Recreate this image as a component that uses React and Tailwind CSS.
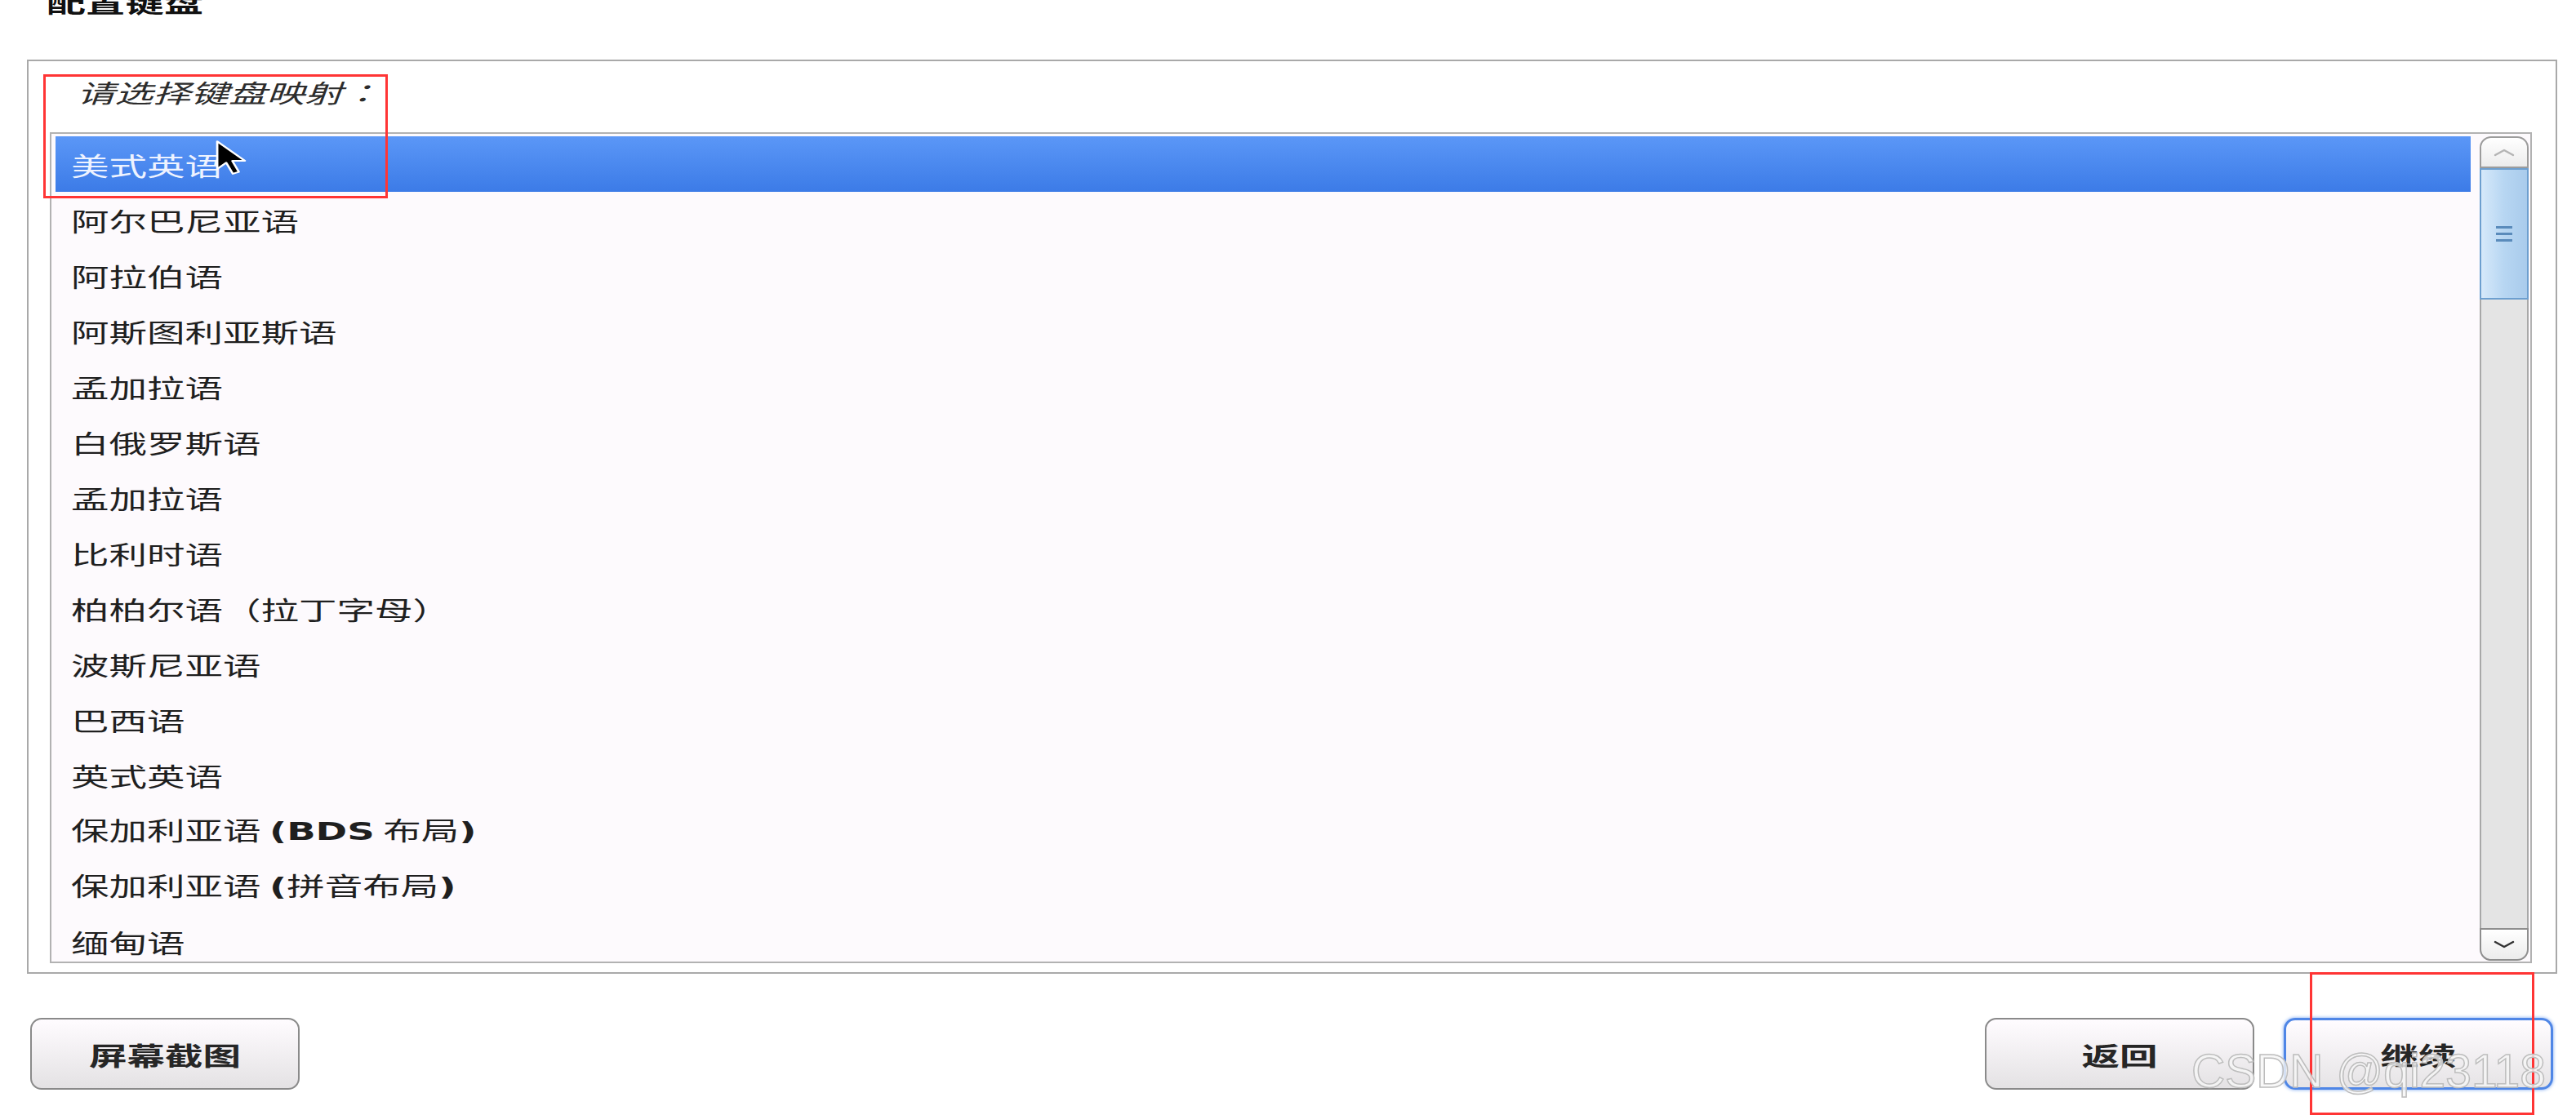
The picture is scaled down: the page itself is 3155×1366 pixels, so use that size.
import React from "react";

const layouts = [
  "美式英语",
  "阿尔巴尼亚语",
  "阿拉伯语",
  "阿斯图利亚斯语",
  "孟加拉语",
  "白俄罗斯语",
  "孟加拉语",
  "比利时语",
  "berber",
  "波斯尼亚语",
  "巴西语",
  "英式英语",
  "bds",
  "pinyin",
  "缅甸语",
];

// the source screenshot is stretched sideways, so text gets a 1.5 x scale
function Stretch({ children, className = "" }) {
  return (
    <span className={`inline-block whitespace-nowrap leading-none scale-x-150 ${className}`}>
      {children}
    </span>
  );
}

// full-width punctuation centred in its cell, as in the screenshot
function Punct({ children }) {
  return <span className="font-['Noto_Sans_CJK_TC']">{children}</span>;
}

function LayoutName({ name }) {
  if (name === "berber") {
    return (
      <>
        柏柏尔语<Punct>（</Punct>拉丁字母<Punct>）</Punct>
      </>
    );
  }
  if (name === "bds") {
    return (
      <>
        保加利亚语 <b className="font-['DejaVu_Sans'] font-bold">(BDS</b> 布局<b className="font-['DejaVu_Sans'] font-bold">)</b>
      </>
    );
  }
  if (name === "pinyin") {
    return (
      <>
        保加利亚语 <b className="font-['DejaVu_Sans'] font-bold">(</b>拼音布局<b className="font-['DejaVu_Sans'] font-bold">)</b>
      </>
    );
  }
  return name;
}

function Chevron({ down, color }) {
  return (
    <svg width="26" height="10" viewBox="0 0 26 10" fill="none">
      <path
        d={down ? "M2 2 L13 8 L24 2" : "M2 8 L13 2 L24 8"}
        stroke={color}
        strokeWidth="2.5"
        strokeLinecap="round"
        strokeLinejoin="round"
      />
    </svg>
  );
}

function Scrollbar() {
  return (
    <div className="flex w-[60px] flex-col pt-[3px] pb-[1px]">
      <div className="flex h-[39px] items-center justify-center rounded-t-[14px] border-2 border-[#9c9c9c] bg-linear-to-b from-white to-[#ececec]">
        <Chevron color="#b4b4b4" />
      </div>
      <div className="flex h-[161px] flex-col items-center justify-center gap-[5px] border-2 border-[#6d9fcf] bg-linear-to-r from-[#d6e9fa] via-[#b7d6f2] to-[#a9cbec]">
        <div className="h-[3px] w-[20px] bg-[#5a8bbb]" />
        <div className="h-[3px] w-[20px] bg-[#5a8bbb]" />
        <div className="h-[3px] w-[20px] bg-[#5a8bbb]" />
      </div>
      <div className="flex-1 border-x-2 border-[#a8a8a8] bg-[#e4e4e4]" />
      <div className="flex h-[40px] items-center justify-center rounded-b-[14px] border-2 border-[#8e8e8e] bg-linear-to-b from-white to-[#ececec]">
        <Chevron down color="#333333" />
      </div>
    </div>
  );
}

function Button({ label, focused }) {
  return (
    <div
      className={
        focused
          ? "flex h-[88px] w-[330px] items-center justify-center rounded-[14px] border-[3px] border-[#4f86e6] bg-linear-to-b from-[#fffcff] to-[#e6e4e6] shadow-[0_0_4px_#7aa6f0]"
          : "flex h-[88px] w-[330px] items-center justify-center rounded-[14px] border-2 border-[#8a8a8a] bg-linear-to-b from-[#fffcff] to-[#e4e2e4]"
      }
    >
      <Stretch className="text-[31px] font-bold text-[#262626]">{label}</Stretch>
    </div>
  );
}

export default function App() {
  return (
    <div className="relative h-[1366px] w-[3155px] overflow-hidden bg-white font-['Noto_Sans_CJK_SC','Noto_Sans',sans-serif] text-[#1f1f1f]">
      <div className="h-[73px] pl-[57px]">
        <div className="-translate-y-[15px]">
          <Stretch className="origin-left text-[32px] font-bold text-[#111]">配置键盘</Stretch>
        </div>
      </div>

      <div className="ml-[33px] flex h-[1120px] w-[3099px] flex-col border-2 border-[#a9a9a9] pt-[17px] pb-[11px]">
        <div className="flex h-[40px] items-center pl-[59px]">
          <Stretch className="origin-left text-[31px] italic text-[#2c2c2c]">
            请选择键盘映射<Punct>：</Punct>
          </Stretch>
        </div>

        <div className="mt-[30px] ml-[26px] flex h-[1018px] w-[3040px] border-2 border-[#b2b2b2] bg-[#fdfafd] pr-[2px]">
          <div className="mr-[11px] flex-1 overflow-hidden pt-[3px] pl-[5px]">
            {layouts.map((name, i) => (
              <div
                key={i}
                className={
                  i === 0
                    ? "flex h-[68px] items-center bg-linear-to-b from-[#5b97f7] to-[#3c7be7] pl-[19px] text-[#eef3ff]"
                    : "flex h-[68px] items-center pl-[19px]"
                }
              >
                <Stretch className="origin-left text-[31px]">
                  <LayoutName name={name} />
                </Stretch>
              </div>
            ))}
          </div>
          <Scrollbar />
        </div>
      </div>

      <div className="mt-[54px] flex items-center justify-between pr-[28px] pl-[37px]">
        <Button label="屏幕截图" />
        <div className="flex gap-[36px]">
          <Button label="返回" />
          <Button label="继续" focused />
        </div>
      </div>

      {/* annotation boxes, cursor and watermark sit over the screenshot */}
      <div className="absolute top-[91px] left-[53px] h-[152px] w-[422px] border-[3px] border-[#ff3535]" />
      <div className="absolute top-[1191px] left-[2829px] h-[175px] w-[275px] border-[3px] border-[#ff3535]" />

      <svg
        className="absolute top-[171px] left-[263px]"
        width="40"
        height="45"
        viewBox="0 0 13 20"
        preserveAspectRatio="none"
      >
        <path
          d="M1 1 L1 16 L4.6 12.6 L7.2 18.6 L9.6 17.6 L7 11.6 L12 11.6 Z"
          fill="#000"
          stroke="#fff"
          strokeWidth="0.9"
          strokeLinejoin="round"
        />
      </svg>

      <div className="absolute top-[1284px] left-[2684px] font-['Liberation_Sans',sans-serif] text-[57px] leading-none whitespace-nowrap text-[#f6f6f6]/80 [-webkit-text-stroke:1.5px_#bdbdbd]">
        CSDN @qi23118
      </div>
    </div>
  );
}
